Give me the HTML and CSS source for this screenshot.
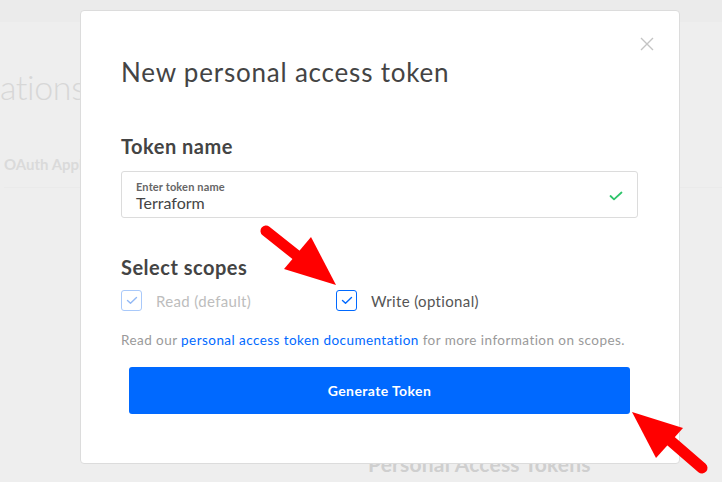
FILE: index.html
```html
<!DOCTYPE html>
<html lang="en">
<head>
<meta charset="utf-8">
<title>New personal access token</title>
<link rel="stylesheet" href="styles.css">
</head>
<body>
<div class="page">
  <div class="page-top"></div>
  <div class="page-main">
    <h1 class="bg-title">ations</h1>
    <div class="bg-tabs">OAuth Applications</div>
    <div class="bg-section">Personal Access Tokens</div>
  </div>
</div>

<div class="modal">
  <button class="close" aria-label="Close">
    <svg width="14" height="14" viewBox="0 0 14 14"><path d="M1 1L13 13M13 1L1 13" stroke="#c4c4c4" stroke-width="1.4" fill="none"/></svg>
  </button>
  <h2 class="modal-title">New personal access token</h2>

  <h3 class="section-title first">Token name</h3>
  <div class="field">
    <div class="field-text">
      <label class="field-label">Enter token name</label>
      <div class="field-value">Terraform</div>
    </div>
    <svg class="field-check" width="14" height="10" viewBox="0 0 14 10"><path d="M1.5 5L5 8.3L12.5 1.5" stroke="#2ec46b" stroke-width="1.8" fill="none" stroke-linecap="round" stroke-linejoin="round"/></svg>
  </div>

  <h3 class="section-title">Select scopes</h3>
  <div class="scopes">
    <div class="scope scope-disabled">
      <span class="box">
        <svg width="12" height="9" viewBox="0 0 12 9"><path d="M1.5 4.5L4.5 7.3L10.5 1.5" stroke="currentColor" stroke-width="1.4" fill="none" stroke-linecap="round" stroke-linejoin="round"/></svg>
      </span>
      <span class="scope-label">Read (default)</span>
    </div>
    <div class="scope">
      <span class="box">
        <svg width="12" height="9" viewBox="0 0 12 9"><path d="M1.5 4.5L4.5 7.3L10.5 1.5" stroke="currentColor" stroke-width="1.4" fill="none" stroke-linecap="round" stroke-linejoin="round"/></svg>
      </span>
      <span class="scope-label">Write (optional)</span>
    </div>
  </div>

  <p class="help">Read our <a href="#">personal access token documentation</a> for more information on scopes.</p>

  <button class="primary">Generate Token</button>
</div>

<svg class="annotations" width="722" height="482" viewBox="0 0 722 482">
  <line x1="266" y1="231" x2="300" y2="258" stroke="#ff0000" stroke-width="11" stroke-linecap="round"/>
  <polygon points="336,285 284,269 311,237" fill="#ff0000"/>
  <line x1="702" y1="468" x2="665" y2="436" stroke="#ff0000" stroke-width="11" stroke-linecap="round"/>
  <polygon points="632,412 683,428 656,458" fill="#ff0000"/>
</svg>
</body>
</html>
```

FILE: styles.css
```css
* { box-sizing: border-box; }

html, body {
  margin: 0;
  padding: 0;
  width: 722px;
  height: 482px;
  overflow: hidden;
  background: #eeeeee;
  font-family: Lato, "Open Sans", "Liberation Sans", sans-serif;
}

.page {
  width: 722px;
  height: 482px;
}

.page-top {
  height: 22px;
  background: #ebebeb;
}

.page-main {
  padding-top: 43px;
}

.bg-title {
  margin: 0;
  font-size: 34px;
  font-weight: 300;
  line-height: 44px;
  color: #d7d7d7;
  letter-spacing: -0.4px;
}

.bg-tabs {
  margin: 45px 0 0 4px;
  font-size: 15px;
  font-weight: 700;
  line-height: 20px;
  color: #dadada;
  padding-bottom: 13px;
  border-bottom: 1px solid #eaeaea;
}

.bg-section {
  margin: 263px 0 0 368px;
  font-size: 21px;
  font-weight: 700;
  line-height: 26px;
  color: #cfcfcf;
  letter-spacing: 0.2px;
}

.modal {
  position: absolute;
  left: 80px;
  top: 10px;
  width: 600px;
  height: 454px;
  background: #fff;
  border: 1px solid #dcdcdc;
  border-radius: 4px;
  padding: 44px 41px 0 40px;
}

.close {
  position: absolute;
  top: 26px;
  right: 25px;
  padding: 0;
  border: 0;
  background: none;
  display: flex;
}

.modal-title {
  margin: 0;
  font-size: 26px;
  font-weight: 400;
  line-height: 34px;
  color: #444;
  letter-spacing: 0.8px;
}

.section-title {
  margin: 36px 0 0;
  font-size: 20px;
  font-weight: 700;
  line-height: 26px;
  color: #444;
  letter-spacing: 0.5px;
}

.section-title.first {
  margin-top: 44px;
}

.field {
  margin-top: 12px;
  height: 47px;
  border: 1px solid #dcdcdc;
  border-radius: 3px;
  display: flex;
  align-items: center;
  justify-content: space-between;
  padding: 0 14px 0 14px;
}

.field-text {
  display: flex;
  flex-direction: column;
  padding-top: 2px;
}

.field-label {
  font-size: 11px;
  font-weight: 700;
  line-height: 13px;
  color: #666;
  letter-spacing: 0.15px;
}

.field-value {
  font-size: 16px;
  line-height: 19px;
  color: #444;
}

.field-check {
  margin-top: 2px;
}

.scopes {
  display: flex;
  margin-top: 10px;
  height: 21px;
  align-items: center;
}

.scope {
  display: flex;
  align-items: center;
  gap: 14px;
}

.scope-disabled {
  width: 215px;
}

.box {
  width: 21px;
  height: 21px;
  border: 1px solid #0069ff;
  border-radius: 3px;
  display: flex;
  align-items: center;
  justify-content: center;
  color: #0069ff;
}

.scope-disabled .box {
  border-color: #a9c9fa;
  color: #93b9f5;
}

.scope-label {
  font-size: 15px;
  color: #555;
  letter-spacing: 0.35px;
}

.scope-disabled .scope-label {
  color: #bdbdbd;
}

.help {
  margin: 19px 0 0;
  font-size: 13.5px;
  line-height: 20px;
  color: #9a9a9a;
  letter-spacing: 0.44px;
}

.help a {
  color: #0069ff;
  text-decoration: none;
}

.primary {
  display: block;
  margin: 17px 8px 0 8px;
  width: 501px;
  height: 47px;
  border: 0;
  border-radius: 3px;
  background: #0069ff;
  color: #fff;
  font-family: inherit;
  font-size: 14px;
  font-weight: 700;
  letter-spacing: 0.4px;
}

.annotations {
  position: absolute;
  left: 0;
  top: 0;
  pointer-events: none;
}
```
